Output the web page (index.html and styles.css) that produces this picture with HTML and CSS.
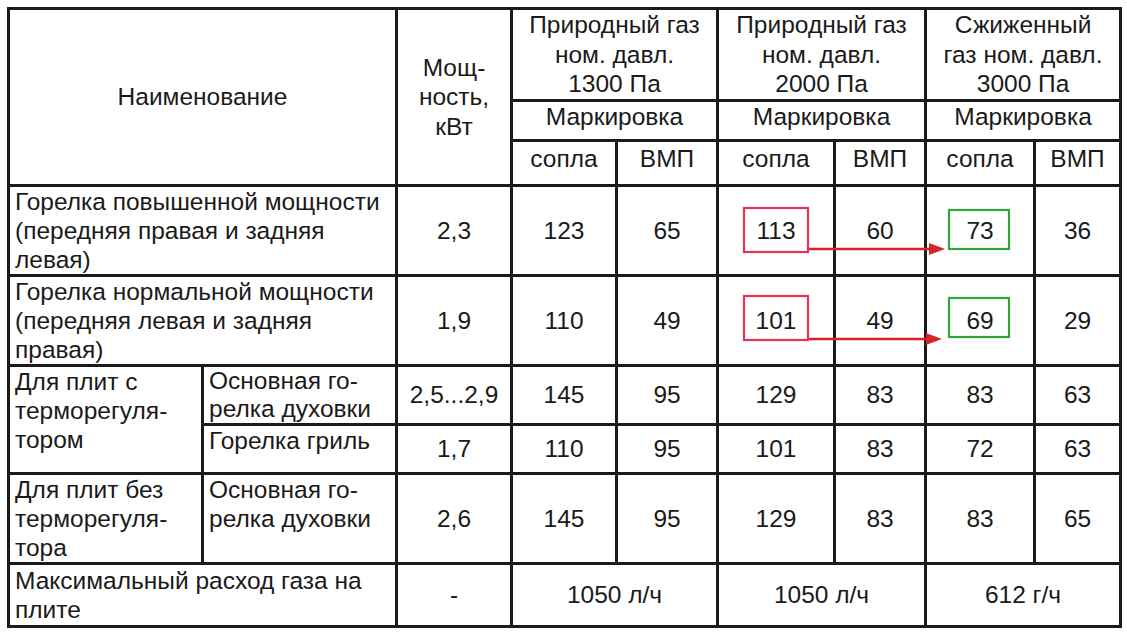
FILE: index.html
```html
<!DOCTYPE html>
<html lang="ru">
<head>
<meta charset="utf-8">
<title>Таблица форсунок</title>
<link rel="stylesheet" href="styles.css">
</head>
<body>
<div class="page">
<table class="spec">
  <colgroup>
    <col class="c-a"><col class="c-b"><col class="c-p">
    <col class="c-s1"><col class="c-v1">
    <col class="c-s2"><col class="c-v2">
    <col class="c-s3"><col class="c-v3">
  </colgroup>
  <thead>
    <tr class="h1">
      <th colspan="2" rowspan="3">Наименование</th>
      <th rowspan="3">Мощ-<br>ность,<br>кВт</th>
      <th colspan="2">Природный газ<br>ном. давл.<br>1300 Па</th>
      <th colspan="2">Природный газ<br>ном. давл.<br>2000 Па</th>
      <th colspan="2">Сжиженный<br>газ ном. давл.<br>3000 Па</th>
    </tr>
    <tr class="h2">
      <th colspan="2">Маркировка</th>
      <th colspan="2">Маркировка</th>
      <th colspan="2">Маркировка</th>
    </tr>
    <tr class="h3">
      <th>сопла</th><th>ВМП</th>
      <th>сопла</th><th>ВМП</th>
      <th>сопла</th><th>ВМП</th>
    </tr>
  </thead>
  <tbody>
    <tr class="r-big">
      <td colspan="2" class="name">Горелка повышенной мощности<br>(передняя правая и задняя<br>левая)</td>
      <td>2,3</td><td>123</td><td>65</td><td>113</td><td>60</td><td>73</td><td>36</td>
    </tr>
    <tr class="r-big">
      <td colspan="2" class="name">Горелка нормальной мощности<br>(передняя левая и задняя<br>правая)</td>
      <td>1,9</td><td>110</td><td>49</td><td>101</td><td>49</td><td>69</td><td>29</td>
    </tr>
    <tr class="r-oven">
      <td rowspan="2" class="name top">Для плит с<br>терморегуля-<br>тором</td>
      <td class="name top tight">Основная го-<br>релка духовки</td>
      <td>2,5...2,9</td><td>145</td><td>95</td><td>129</td><td>83</td><td>83</td><td>63</td>
    </tr>
    <tr class="r-grill">
      <td class="name top">Горелка гриль</td>
      <td>1,7</td><td>110</td><td>95</td><td>101</td><td>83</td><td>72</td><td>63</td>
    </tr>
    <tr class="r-big">
      <td class="name top">Для плит без<br>терморегуля-<br>тора</td>
      <td class="name top">Основная го-<br>релка духовки</td>
      <td>2,6</td><td>145</td><td>95</td><td>129</td><td>83</td><td>83</td><td>65</td>
    </tr>
    <tr class="r-total">
      <td colspan="2" class="name">Максимальный расход газа на<br>плите</td>
      <td>-</td>
      <td colspan="2">1050 л/ч</td>
      <td colspan="2">1050 л/ч</td>
      <td colspan="2">612 г/ч</td>
    </tr>
  </tbody>
</table>

<svg class="marks" width="1127" height="640" viewBox="0 0 1127 640" aria-hidden="true">
  <g class="arrow">
    <line x1="809" y1="249" x2="932" y2="249"/>
    <polygon points="945,249 929,243 929,255"/>
    <line x1="809" y1="339" x2="929" y2="339"/>
    <polygon points="942,339 926,333 926,345"/>
  </g>
  <rect class="box-red" x="744" y="208" width="64" height="44"/>
  <rect class="box-red" x="744" y="296" width="64" height="44"/>
  <rect class="box-green" x="949" y="210" width="60" height="39"/>
  <rect class="box-green" x="949" y="298" width="60" height="39"/>
</svg>
</div>
</body>
</html>
```

FILE: styles.css
```css
html, body {
  margin: 0;
  padding: 0;
  background: #ffffff;
}

.page {
  position: relative;
  width: 1127px;
  height: 640px;
  overflow: hidden;
}

.spec {
  margin: 7px 0 0 7px;
  width: 1115px;
  border-collapse: collapse;
  table-layout: fixed;
  font-family: "Liberation Sans", Arial, sans-serif;
  font-size: 24.5px;
  line-height: 29.5px;
  color: #1a1a1a;
}

.spec th,
.spec td {
  border: 3px solid #1b1b1b;
  padding: 0 4px;
  text-align: center;
  vertical-align: middle;
  font-weight: normal;
  white-space: nowrap;
}

.spec tbody td {
  line-height: 29px;
}

.c-a { width: 194px; }
.c-b { width: 194px; }
.c-p { width: 115px; }
.c-s1 { width: 105px; }
.c-v1 { width: 101px; }
.c-s2 { width: 117px; }
.c-v2 { width: 91px; }
.c-s3 { width: 109px; }
.c-v3 { width: 86px; }

.h1 { height: 90px; }
.h2 { height: 40px; }
.h3 { height: 45px; }

.h2 th,
.h3 th {
  padding-bottom: 7px;
}

.r-big { height: 90px; }
.r-oven { height: 59px; }
.r-grill { height: 49px; }
.r-total { height: 63px; }

.spec td.name {
  text-align: left;
  padding-left: 5px;
}

.spec td.top {
  vertical-align: top;
}

.spec td.tight {
  line-height: 28px;
}

.marks {
  position: absolute;
  left: 0;
  top: 0;
  pointer-events: none;
}

.arrow line {
  stroke: #d8232a;
  stroke-width: 2.5;
}

.arrow polygon {
  fill: #d8232a;
}

.box-red {
  fill: none;
  stroke: #e6335a;
  stroke-width: 2.2;
}

.box-green {
  fill: none;
  stroke: #2fa53a;
  stroke-width: 2.2;
}
```
